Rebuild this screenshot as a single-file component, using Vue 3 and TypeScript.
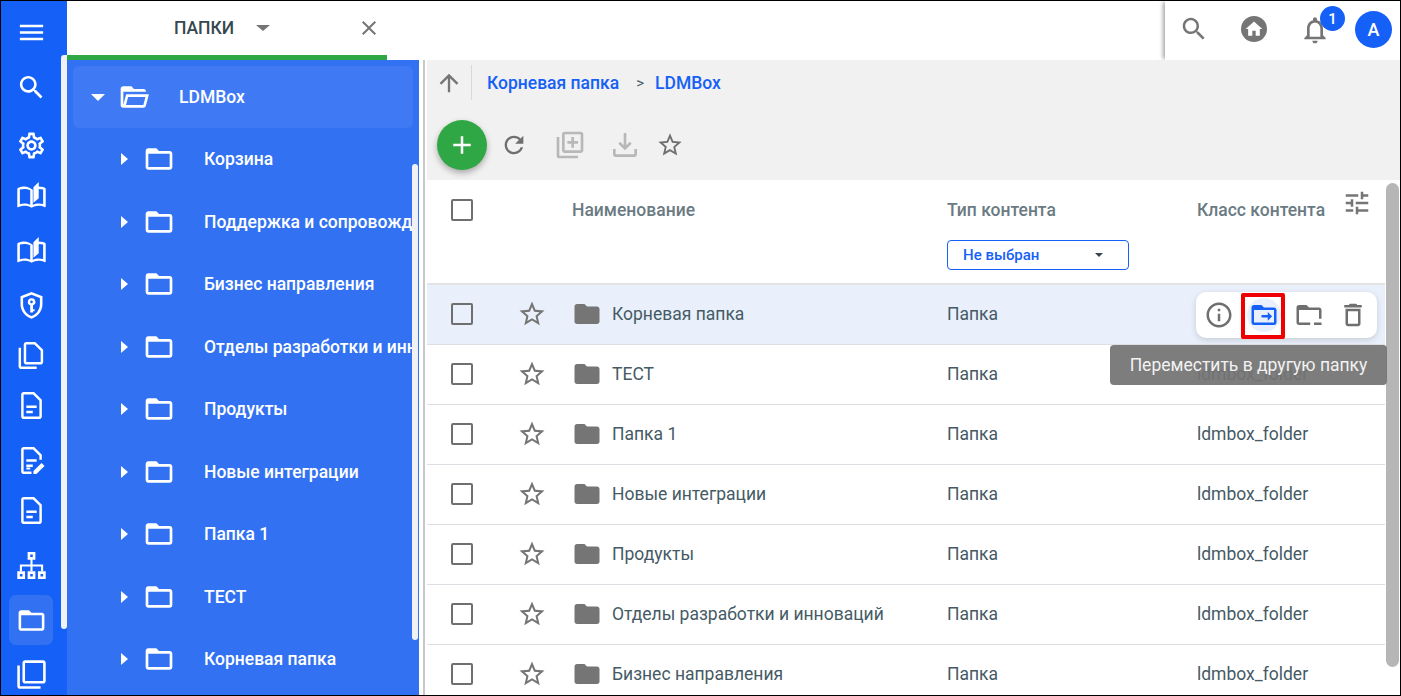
<script setup lang="ts">
interface RailItem { key: string; gap: number; active?: boolean }
const rail: RailItem[] = [
  { key: 'menu', gap: 15 },
  { key: 'search', gap: 23 },
  { key: 'gear', gap: 26 },
  { key: 'book', gap: 18 },
  { key: 'book', gap: 23 },
  { key: 'shield', gap: 23 },
  { key: 'copy', gap: 18 },
  { key: 'doc', gap: 18 },
  { key: 'edit', gap: 23 },
  { key: 'doc', gap: 18 },
  { key: 'tree', gap: 23 },
  { key: 'folder', gap: 23, active: true },
  { key: 'filter', gap: 22 },
]
const tree = ['Корзина', 'Поддержка и сопровождение', 'Бизнес направления', 'Отделы разработки и инноваций', 'Продукты', 'Новые интеграции', 'Папка 1', 'ТЕСТ', 'Корневая папка']
const rows = ['Корневая папка', 'ТЕСТ', 'Папка 1', 'Новые интеграции', 'Продукты', 'Отделы разработки и инноваций', 'Бизнес направления']
const star = 'M22 9.24l-7.19-.62L12 2 9.19 8.63 2 9.24l5.46 4.73L5.82 21 12 17.27 18.18 21l-1.63-7.03L22 9.24zM12 15.4l-3.76 2.27 1-4.28-3.32-2.88 4.38-.38L12 6.1l1.71 4.04 4.38.38-3.32 2.88 1 4.28L12 15.4z'
const folderOutline = 'M20 6h-8l-2-2H4c-1.1 0-1.99.9-1.99 2L2 18c0 1.1.9 2 2 2h16c1.1 0 2-.9 2-2V8c0-1.1-.9-2-2-2zm0 12H4V8h16v10z'
const folderFilled = 'M10 4H4c-1.1 0-1.99.9-1.99 2L2 18c0 1.1.9 2 2 2h16c1.1 0 2-.9 2-2V8c0-1.1-.9-2-2-2h-8l-2-2z'
</script>

<template>
  <div class="app">
    <nav class="rail">
      <div
        v-for="(item, i) in rail"
        :key="i"
        class="rail-item"
        :class="{ active: item.active }"
        :style="{ marginTop: item.gap + 'px' }"
      >
        <svg viewBox="0 0 24 24" class="rail-icon">
          <path v-if="item.key === 'menu'" d="M3 18h18v-2H3v2zm0-5h18v-2H3v2zm0-7v2h18V6H3z" />
          <path v-else-if="item.key === 'search'" d="M15.5 14h-.79l-.28-.27C15.41 12.59 16 11.11 16 9.5 16 5.91 13.09 3 9.5 3S3 5.91 3 9.5 5.91 16 9.5 16c1.61 0 3.09-.59 4.23-1.57l.27.28v.79l5 4.99L20.49 19l-4.99-5zm-6 0C7.01 14 5 11.99 5 9.5S7.01 5 9.5 5 14 7.01 14 9.5 11.99 14 9.5 14z" />
          <path v-else-if="item.key === 'gear'" d="M19.43 12.98c.04-.32.07-.64.07-.98 0-.34-.03-.66-.07-.98l2.11-1.65c.19-.15.24-.42.12-.64l-2-3.46c-.09-.16-.26-.25-.44-.25-.06 0-.12.01-.17.03l-2.49 1c-.52-.4-1.08-.73-1.69-.98l-.38-2.65C14.46 2.18 14.25 2 14 2h-4c-.25 0-.46.18-.49.42l-.38 2.65c-.61.25-1.17.59-1.69.98l-2.49-1c-.06-.02-.12-.03-.18-.03-.17 0-.34.09-.43.25l-2 3.46c-.13.22-.07.49.12.64l2.11 1.65c-.04.32-.07.65-.07.98 0 .33.03.66.07.98l-2.11 1.65c-.19.15-.24.42-.12.64l2 3.46c.09.16.26.25.44.25.06 0 .12-.01.17-.03l2.49-1c.52.4 1.08.73 1.69.98l.38 2.65c.03.24.24.42.49.42h4c.25 0 .46-.18.49-.42l.38-2.65c.61-.25 1.17-.59 1.69-.98l2.49 1c.06.02.12.03.18.03.17 0 .34-.09.43-.25l2-3.46c.12-.22.07-.49-.12-.64l-2.11-1.65zm-1.98-1.71c.04.31.05.52.05.73 0 .21-.02.43-.05.73l-.14 1.13.89.7 1.08.84-.7 1.21-1.27-.51-1.04-.42-.9.68c-.43.32-.84.56-1.25.73l-1.06.43-.16 1.13-.2 1.35h-1.4l-.19-1.35-.16-1.13-1.06-.43c-.43-.18-.83-.41-1.23-.71l-.91-.7-1.06.43-1.27.51-.7-1.21 1.08-.84.89-.7-.14-1.13c-.03-.31-.05-.54-.05-.74s.02-.43.05-.73l.14-1.13-.89-.7-1.08-.84.7-1.21 1.27.51 1.04.42.9-.68c.43-.32.84-.56 1.25-.73l1.06-.43.16-1.13.2-1.35h1.39l.19 1.35.16 1.13 1.06.43c.43.18.83.41 1.23.71l.91.7 1.06-.43 1.27-.51.7 1.21-1.07.85-.89.7.14 1.13zM12 8c-2.21 0-4 1.79-4 4s1.79 4 4 4 4-1.79 4-4-1.79-4-4-4zm0 6c-1.1 0-2-.9-2-2s.9-2 2-2 2 .9 2 2-.9 2-2 2z" />
          <g v-else-if="item.key === 'book'">
            <path d="M21 5.5c-1.11-.35-2.33-.5-3.5-.5-.6 0-1.2.04-1.8.13v1.95c.6-.09 1.2-.13 1.8-.13 1.2 0 2.4.15 3.5.5v11.2c-1.1-.35-2.3-.5-3.5-.5-1.34 0-3.13.41-4.5.99V7.5C11.55 6.4 8.45 5 6.5 5S2.45 5.4 1 6.5v14.15c0 .25.25.5.5.5.1 0 .15-.05.25-.05C3.1 20.45 5.05 20 6.5 20c1.95 0 4.05.4 5.5 1.5 1.35-.85 3.8-1.5 5.5-1.5 1.65 0 3.35.3 4.75 1.05.1.05.15.05.25.05.25 0 .5-.25.5-.5V6.5c-.6-.45-1.25-.75-2-1zM11 19.2c-1.37-.58-3.16-.99-4.5-.99-1.2 0-2.4.15-3.5.5V7.4C4.1 7.05 5.3 6.9 6.5 6.9c1.34 0 3.13.41 4.5.99v11.31z" />
            <path d="M17.6 1.5l-4.1 4.2v12l4.1-3.6z" />
          </g>
          <g v-else-if="item.key === 'shield'">
            <path d="M12 1.5L3.5 4.8v6.3c0 5 3.6 9.7 8.5 11.2 4.9-1.5 8.5-6.2 8.5-11.2V4.8L12 1.5zm6.5 9.6c0 4-2.7 7.8-6.5 9.1-3.8-1.3-6.5-5.1-6.5-9.1V6.2L12 3.7l6.5 2.5v4.9z" />
            <path d="M12 6.3a2.9 2.9 0 0 0-1 5.6V17.5h2.2v-1h1.2v-1.6h-1.2v-3a2.9 2.9 0 0 0-1.2-5.6zm0 1.9a1 1 0 1 1 0 2 1 1 0 0 1 0-2z" />
          </g>
          <path v-else-if="item.key === 'copy'" d="M16 22.5H4c-1.1 0-2-.9-2-2V6h1.9v14.6H16v1.9zM15 1.5H8c-1.1 0-2 .9-2 2V17c0 1.1.9 2 2 2h11c1.1 0 2-.9 2-2V7.5l-6-6zM19.1 17.1H7.9V3.4h6.3l4.9 4.9v8.8z" />
          <g v-else-if="item.key === 'doc'">
            <path d="M14 1.5H6c-1.1 0-2 .9-2 2v17c0 1.1.9 2 2 2h12c1.1 0 2-.9 2-2V7.5l-6-6zm4.1 19.1H5.9V3.4h7.3l4.9 4.9v12.3z" />
            <path d="M8 12h8v2H8zM8 16h5v2H8z" />
          </g>
          <g v-else-if="item.key === 'edit'">
            <path d="M14 1.5H6c-1.1 0-2 .9-2 2v17c0 1.1.9 2 2 2h6v-1.9H5.9V3.4h7.3l4.9 4.9v3.2H20v-4l-6-6z" />
            <path d="M8 11h8v2H8zM8 15h5v2H8zM8 19h3v-1.5H8zM13.5 20.2v2.3h2.3l6.3-6.3-2.3-2.3z" />
          </g>
          <g v-else-if="item.key === 'tree'">
            <path d="M9 1.5h6v6h-6zm2 2v2h2v-2zM1 16.5h6v6H1zm2 2v2h2v-2zM9 16.5h6v6H9zm2 2v2h2v-2zM17 16.5h6v6h-6zm2 2v2h2v-2z" fill-rule="evenodd" />
            <path d="M11.2 7h1.6v4.2H21v5.3h-1.6v-3.7h-6.6v3.7h-1.6v-3.7H4.6v3.7H3v-5.3h8.2z" />
          </g>
          <path v-else-if="item.key === 'folder'" :d="folderOutline" />
          <path v-else d="M3 5H1v16c0 1.1.9 2 2 2h16v-2H3V5zm18-4H7c-1.1 0-2 .9-2 2v14c0 1.1.9 2 2 2h14c1.1 0 2-.9 2-2V3c0-1.1-.9-2-2-2zm0 16H7V3h14v14z" />
        </svg>
      </div>
      <div class="rail-scroll"></div>
    </nav>

    <div class="main">
      <header class="topbar">
        <div class="tab">
          <span class="tab-title">ПАПКИ</span>
          <span class="tab-caret"></span>
          <svg class="tab-close" viewBox="0 0 24 24"><path d="M19 6.41L17.59 5 12 10.59 6.41 5 5 6.41 10.59 12 5 17.59 6.41 19 12 13.41 17.59 19 19 17.59 13.41 12z" /></svg>
        </div>
        <div class="top-actions">
          <svg class="top-search" viewBox="0 0 24 24"><path d="M15.5 14h-.79l-.28-.27C15.41 12.59 16 11.11 16 9.5 16 5.91 13.09 3 9.5 3S3 5.91 3 9.5 5.91 16 9.5 16c1.61 0 3.09-.59 4.23-1.57l.27.28v.79l5 4.99L20.49 19l-4.99-5zm-6 0C7.01 14 5 11.99 5 9.5S7.01 5 9.5 5 14 7.01 14 9.5 11.99 14 9.5 14z" /></svg>
          <span class="home"><svg viewBox="0 0 24 24"><path d="M10 20v-6h4v6h5v-8h3L12 3 2 12h3v8z" /></svg></span>
          <span class="bell">
            <svg viewBox="0 0 24 24"><path d="M12 22c1.1 0 2-.9 2-2h-4c0 1.1.9 2 2 2zm6-6v-5c0-3.07-1.63-5.64-4.5-6.32V4c0-.83-.67-1.5-1.5-1.5s-1.5.67-1.5 1.5v.68C7.64 5.36 6 7.92 6 11v5l-2 2v1h16v-1l-2-2zm-2 1H8v-6c0-2.48 1.51-4.5 4-4.5s4 2.02 4 4.5v6z" /></svg>
            <span class="badge">1</span>
          </span>
          <span class="avatar">A</span>
        </div>
      </header>

      <div class="body">
        <aside class="tree">
          <div class="tree-root">
            <span class="caret-down"></span>
            <svg class="tree-open" viewBox="0 0 24 24"><path d="M6.1 10L4 18V8h17a2 2 0 0 0-2-2h-7l-2-2H4a2 2 0 0 0-2 2v12a2 2 0 0 0 2 2h15c.9 0 1.7-.6 1.9-1.5L23.2 10H6.1zM19 18H6l1.6-6h13L19 18z" /></svg>
            <span class="tree-label root-label">LDMBox</span>
          </div>
          <div v-for="name in tree" :key="name" class="tree-row">
            <span class="caret-right"></span>
            <svg class="tree-folder" viewBox="0 0 24 24"><path :d="folderOutline" /></svg>
            <span class="tree-label">{{ name }}</span>
          </div>
          <div class="tree-scroll"></div>
        </aside>
        <div class="splitter"></div>

        <section class="content">
          <div class="crumbs">
            <svg class="up" viewBox="0 0 24 24"><path d="M4 12l1.41 1.41L11 7.83V20h2V7.83l5.58 5.59L20 12l-8-8-8 8z" /></svg>
            <span class="crumb-line"></span>
            <span class="crumb">Корневая папка</span>
            <span class="crumb-sep">&gt;</span>
            <span class="crumb">LDMBox</span>
          </div>
          <div class="toolbar">
            <span class="fab"><svg viewBox="0 0 24 24"><path d="M19 13h-6v6h-2v-6H5v-2h6V5h2v6h6v2z" /></svg></span>
            <svg class="tool refresh" viewBox="0 0 24 24"><path d="M17.65 6.35C16.2 4.9 14.21 4 12 4c-4.42 0-7.99 3.58-7.99 8s3.57 8 7.99 8c3.73 0 6.84-2.55 7.73-6h-2.08c-.82 2.33-3.04 4-5.65 4-3.31 0-6-2.69-6-6s2.69-6 6-6c1.66 0 3.14.69 4.22 1.78L13 11h7V4l-2.35 2.35z" /></svg>
            <svg class="tool tool-off add" viewBox="0 0 24 24"><path d="M4 6H2v14c0 1.1.9 2 2 2h14v-2H4V6zm16-4H8c-1.1 0-2 .9-2 2v12c0 1.1.9 2 2 2h12c1.1 0 2-.9 2-2V4c0-1.1-.9-2-2-2zm0 14H8V4h12v12zm-7-2h2v-3h3V9h-3V6h-2v3h-3v2h3z" /></svg>
            <svg class="tool tool-off dl" viewBox="0 0 24 24"><path d="M19 15v4H5v-4H3v4c0 1.1.9 2 2 2h14c1.1 0 2-.9 2-2v-4h-2zm-7 1l5-5-1.41-1.41L13 12.17V3h-2v9.17L8.41 9.59 7 11l5 5z" /></svg>
            <svg class="tool fav" viewBox="0 0 24 24"><path :d="star" /></svg>
          </div>

          <div class="table-wrap">
            <div class="table">
              <div class="thead">
                <div class="th-check"><span class="checkbox"></span></div>
                <div class="th th-name">Наименование</div>
                <div class="th th-type">
                  <span>Тип контента</span>
                  <div class="select"><span>Не выбран</span><i class="select-caret"></i></div>
                </div>
                <div class="th th-class">Класс контента</div>
                <svg class="tune" viewBox="0 0 24 24"><path d="M3 17v2h6v-2H3zM3 5v2h10V5H3zm10 16v-2h8v-2h-8v-2h-2v6h2zM7 9v2H3v2h4v2h2V9H7zm14 4v-2H11v2h10zm-6-4h2V7h4V5h-4V3h-2v6z" /></svg>
              </div>
              <div v-for="(row, i) in rows" :key="row" class="row" :class="{ hover: i === 0 }">
                <div class="cell-check"><span class="checkbox"></span></div>
                <svg class="row-star" viewBox="0 0 24 24"><path :d="star" /></svg>
                <svg class="row-folder" viewBox="0 0 24 24"><path :d="folderFilled" /></svg>
                <div class="cell-name">{{ row }}</div>
                <div class="cell-type">Папка</div>
                <div class="cell-class">ldmbox_folder</div>
              </div>
            </div>
            <div class="v-scroll"><div class="v-thumb"></div></div>

            <div class="row-actions">
              <svg viewBox="0 0 24 24"><path d="M11 7h2v2h-2zm0 4h2v6h-2zm1-9C6.48 2 2 6.48 2 12s4.48 10 10 10 10-4.48 10-10S17.52 2 12 2zm0 18c-4.41 0-8-3.59-8-8s3.59-8 8-8 8 3.59 8 8-3.59 8-8 8z" /></svg>
              <span class="move-btn"><svg viewBox="0 0 24 24"><path d="M20 6h-8l-2-2H4c-1.1 0-2 .9-2 2v12c0 1.1.9 2 2 2h16c1.1 0 2-.9 2-2V8c0-1.1-.9-2-2-2zm0 12H4V8h16v10z" /><path d="M15 9.5V12h-5v2h5v2.5l3.5-3.5z" /></svg></span>
              <svg viewBox="0 0 24 24"><path d="M20 6h-8l-2-2H4c-1.1 0-2 .9-2 2v12c0 1.1.9 2 2 2h9v-2H4V8h16v7h2V8c0-1.1-.9-2-2-2zM16 18h6v2h-6z" /></svg>
              <svg viewBox="0 0 24 24"><path d="M16 9v10H8V9h8m-1.5-6h-5l-1 1H5v2h14V4h-3.5l-1-1zM18 7H6v12c0 1.1.9 2 2 2h8c1.1 0 2-.9 2-2V7z" /></svg>
            </div>
            <div class="highlight"></div>
            <div class="tooltip">Переместить в другую папку</div>
          </div>
        </section>
      </div>
    </div>
  </div>
</template>

<style>
html, body { margin: 0; padding: 0; background: #fff; overflow: hidden; }
</style>

<style scoped>
.app { position: relative; box-sizing: border-box; width: 1401px; height: 696px; border: 1px solid #000; display: flex; overflow: hidden; font-family: Roboto, "Liberation Sans", sans-serif; font-size: 17.5px; color: #455a64; }
.rail { position: relative; flex: 0 0 66px; box-sizing: border-box; width: 66px; padding-right: 6px; background: #1560f6; display: flex; flex-direction: column; align-items: center; }
.rail-item { flex: 0 0 32px; width: 44px; height: 32px; display: flex; align-items: center; justify-content: center; position: relative; }
.rail-item.active::before { content: ""; position: absolute; left: 0; right: 0; top: -9px; bottom: -9px; background: #3272f2; border-radius: 7px; }
.rail-icon { position: relative; width: 31px; height: 31px; fill: #fff; }
.rail-scroll { position: absolute; left: 60px; top: 54px; width: 6px; height: 574px; background: #f0f1f3; border-radius: 4px 0 4px 4px; }

.main { flex: 1; min-width: 0; display: flex; flex-direction: column; }
.topbar { flex: 0 0 59px; display: flex; justify-content: space-between; background: #fff; }
.tab { position: relative; box-sizing: border-box; width: 320px; height: 59px; border-bottom: 5px solid #2fa744; display: flex; align-items: center; padding-left: 107px; }
.tab-title { font-weight: 500; font-size: 17.5px; color: #37474f; }
.tab-caret { margin-left: 22px; width: 0; height: 0; border-left: 7px solid transparent; border-right: 7px solid transparent; border-top: 6px solid #757575; }
.tab-close { margin-left: 87px; width: 24px; height: 24px; fill: #757575; }
.top-actions { position: relative; width: 235px; display: flex; align-items: center; box-shadow: -3px 0 4px -1px rgba(0, 0, 0, .35); }
.top-search { position: absolute; left: 14px; top: 13px; width: 30px; height: 30px; fill: #757575; }
.home { position: absolute; left: 76px; top: 15px; width: 26px; height: 26px; border-radius: 50%; background: #757575; display: flex; align-items: center; justify-content: center; }
.home svg { width: 20px; height: 20px; fill: #fff; }
.bell { position: absolute; left: 134px; top: 13px; width: 32px; height: 32px; }
.bell svg { width: 32px; height: 32px; fill: #757575; }
.badge { position: absolute; left: 21px; top: -8px; width: 25px; height: 25px; border-radius: 50%; background: #1560f6; color: #fff; font-size: 15px; font-weight: 500; display: flex; align-items: center; justify-content: center; }
.avatar { position: absolute; left: 190px; top: 10px; width: 37px; height: 37px; border-radius: 50%; background: #1560f6; color: #fff; font-size: 18px; font-weight: 500; display: flex; align-items: center; justify-content: center; }

.body { flex: 1; display: flex; min-height: 0; background: #fff; }
.tree { position: relative; flex: 0 0 352px; box-sizing: border-box; padding: 6px 6px 0; background: #3272f2; overflow: hidden; }
.tree-root { height: 62px; background: #3f7af4; border-radius: 6px; display: flex; align-items: center; padding-left: 18px; }
.caret-down { width: 0; height: 0; border-left: 7px solid transparent; border-right: 7px solid transparent; border-top: 7px solid #fff; }
.tree-open { width: 32px; height: 32px; fill: #fff; margin-left: 13px; flex: none; }
.tree-row { height: 62.5px; display: flex; align-items: center; padding-left: 48px; white-space: nowrap; overflow: hidden; }
.caret-right { flex: none; width: 0; height: 0; border-top: 6px solid transparent; border-bottom: 6px solid transparent; border-left: 7px solid #fff; }
.tree-folder { flex: none; width: 32px; height: 32px; fill: #fff; margin-left: 15px; }
.tree-label { font-weight: 500; font-size: 17.5px; color: #fff; margin-left: 29px; white-space: nowrap; }
.tree-root .root-label { margin-left: 29px; }
.tree-scroll { position: absolute; right: 1px; top: 104px; width: 6px; height: 476px; background: #f0f1f3; border-radius: 4px; }
.splitter { flex: 0 0 6px; box-sizing: border-box; border-left: 4px solid #fff; background: #c8c8c8; }

.content { position: relative; flex: 1; min-width: 0; box-sizing: border-box; border-left: 2px solid #fff; background: #f1f1f1; display: flex; flex-direction: column; }
.crumbs { flex: 0 0 47px; display: flex; align-items: center; box-sizing: border-box; padding: 0 0 2px 8px; }
.up { width: 28px; height: 28px; fill: #757575; flex: none; }
.crumb-line { width: 1px; height: 35px; background: #d8d8d8; margin-left: 8px; margin-right: 15px; }
.crumb { color: #1560f6; font-weight: 500; font-size: 17.5px; }
.crumb-sep { color: #455a64; font-size: 15px; margin: 0 11px 0 17px; }
.toolbar { flex: 0 0 73px; position: relative; display: flex; align-items: flex-start; box-sizing: border-box; padding-left: 10px; padding-top: 13px; }
.fab { flex: none; width: 50px; height: 50px; border-radius: 50%; background: #2fa744; box-shadow: 0 3px 6px rgba(0, 0, 0, .3); display: flex; align-items: center; justify-content: center; }
.fab svg { width: 30px; height: 30px; fill: #fff; }
.tool { flex: none; width: 32px; height: 32px; fill: #6f6f6f; margin-top: 9px; }
.refresh { width: 28px; height: 28px; margin-top: 11px; margin-left: 13px; }
.tool-off { fill: #b8b8b8; }
.add { margin-left: 26px; }
.dl { margin-left: 23px; }
.fav { width: 28px; height: 28px; margin-top: 11px; margin-left: 15px; }

.table-wrap { flex: 1; position: relative; display: flex; min-height: 0; }
.table { flex: 1; min-width: 0; background: #fff; overflow: hidden; }
.thead { position: relative; box-sizing: border-box; height: 105px; display: grid; grid-template-columns: 145px 375px 250px 1fr; border-bottom: 2px solid #e3e3e3; }
.th-check { padding: 19px 0 0 24px; }
.checkbox { display: block; box-sizing: border-box; width: 22px; height: 22px; border: 2px solid #6f6f6f; border-radius: 2px; }
.th { font-weight: 500; font-size: 17.5px; color: #6b7b83; padding-top: 21px; line-height: 18px; }
.th-type { display: flex; flex-direction: column; align-items: flex-start; }
.select { box-sizing: border-box; margin-top: 21px; width: 182px; height: 30px; border: 1px solid #1560f6; border-radius: 4px; display: flex; align-items: center; justify-content: space-between; padding: 0 25px 0 15px; font-size: 15px; color: #1560f6; }
.select-caret { width: 0; height: 0; border-left: 4px solid transparent; border-right: 4px solid transparent; border-top: 4px solid #37474f; }
.tune { position: absolute; right: 13px; top: 8px; width: 30px; height: 30px; fill: #757575; }
.row { box-sizing: border-box; height: 60px; padding-bottom: 2px; display: grid; grid-template-columns: 69px 75px 30px 346px 250px 1fr; align-items: center; border-bottom: 1px solid #dcdfe3; background: #fff; font-size: 17.5px; }
.row.hover { background: #e9f0fb; }
.cell-check { padding-left: 24px; }
.row-star { width: 30px; height: 30px; fill: #757575; margin-left: 21px; }
.row-folder { width: 30px; height: 30px; fill: #757575; margin-left: 1px; }
.cell-name { padding-left: 11px; color: #455a64; white-space: nowrap; }
.cell-type, .cell-class { color: #455a64; }
.v-scroll { flex: 0 0 15px; background: #fff; padding: 3px 1px 0; box-sizing: border-box; }
.v-thumb { height: 484px; background: #b6b6b6; border-radius: 7px; }
.row-actions { position: absolute; left: 769px; top: 112px; box-sizing: border-box; width: 181px; height: 46px; background: #fff; border-radius: 10px; box-shadow: 0 2px 6px rgba(0, 0, 0, .15); display: grid; grid-template-columns: 45px 46px 43px 46px; align-items: center; justify-items: center; }
.row-actions svg { width: 30px; height: 30px; fill: #6f6f6f; }
.move-btn { width: 34px; height: 34px; border-radius: 50%; background: #e9f0fb; display: flex; align-items: center; justify-content: center; }
.row-actions .move-btn svg { fill: #1560f6; flex: none; }
.highlight { position: absolute; left: 814px; top: 113px; box-sizing: border-box; width: 44px; height: 46px; border: 4px solid #f00000; border-radius: 2px; }
.tooltip { position: absolute; left: 683px; top: 165px; box-sizing: border-box; width: 277px; height: 40px; background: rgba(115, 115, 115, .93); border-radius: 4px; color: #f2f2f2; font-size: 17.5px; display: flex; align-items: center; justify-content: center; }
</style>
